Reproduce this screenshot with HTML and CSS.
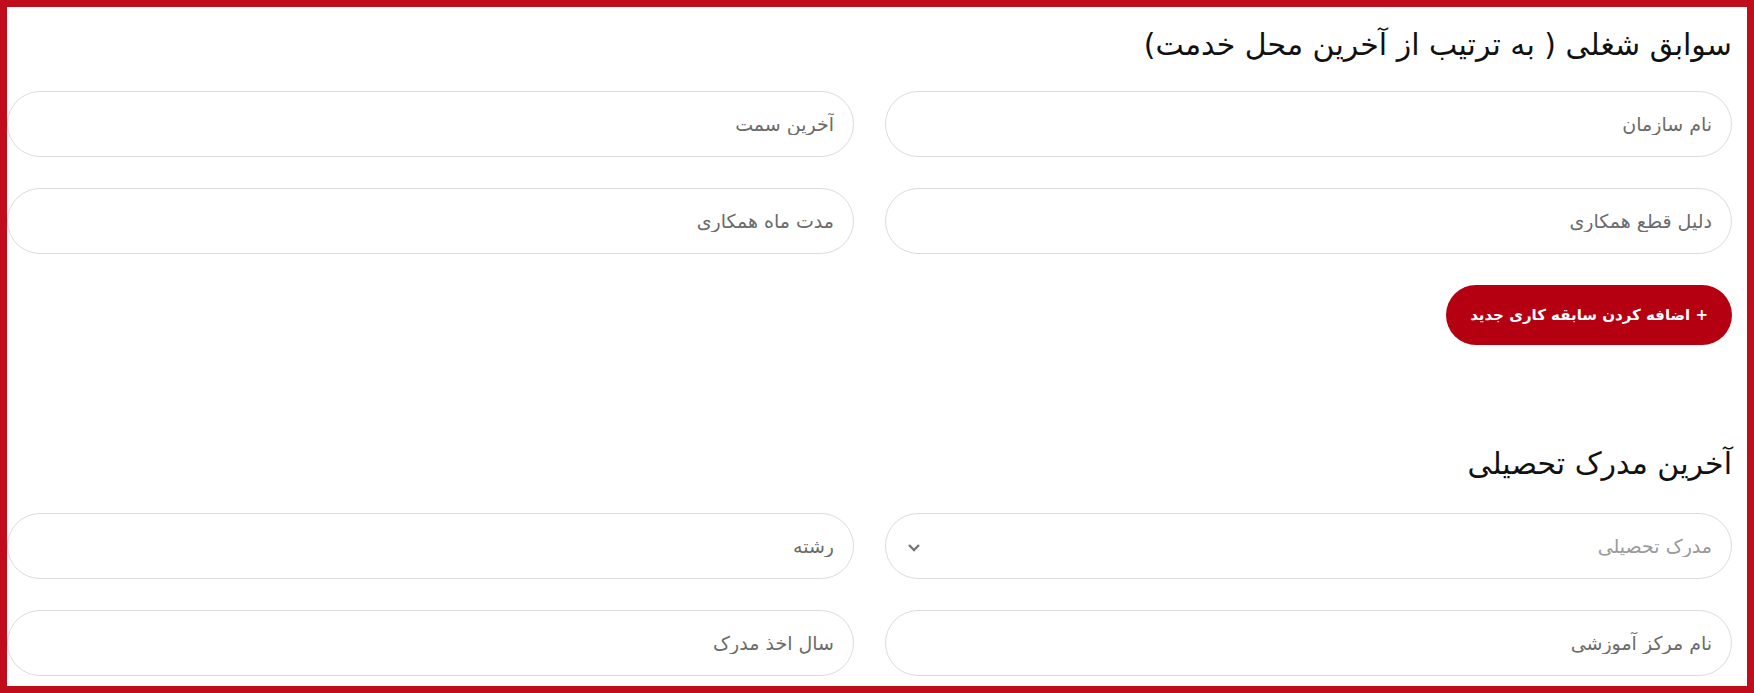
FILE: index.html
```html
<!DOCTYPE html>
<html lang="fa" dir="rtl">
<head>
<meta charset="utf-8">
<title>فرم استخدام</title>
<link rel="stylesheet" href="styles.css">
</head>
<body>
<main class="page">
  <section class="section">
    <h2 class="section-title">سوابق شغلی ( به ترتیب از آخرین محل خدمت)</h2>
    <div class="grid">
      <input class="field" type="text" placeholder="نام سازمان">
      <input class="field" type="text" placeholder="آخرین سمت">
      <input class="field" type="text" placeholder="دلیل قطع همکاری">
      <input class="field" type="text" placeholder="مدت ماه همکاری">
    </div>
    <div class="actions">
      <button class="btn-add" type="button">+ اضافه کردن سابقه کاری جدید</button>
    </div>
  </section>
  <section class="section section-edu">
    <h2 class="section-title">آخرین مدرک تحصیلی</h2>
    <div class="grid">
      <div class="select-wrap">
        <select class="field select">
          <option>مدرک تحصیلی</option>
        </select>
        <svg class="chevron" width="14" height="9" viewBox="0 0 14 9"><path d="M2 2 L7 7 L12 2" fill="none" stroke="#777" stroke-width="2.4"/></svg>
      </div>
      <input class="field" type="text" placeholder="رشته">
      <input class="field" type="text" placeholder="نام مرکز آموزشی">
      <input class="field" type="text" placeholder="سال اخذ مدرک">
    </div>
  </section>
</main>
</body>
</html>
```

FILE: styles.css
```css
* { box-sizing: border-box; }

html, body { margin: 0; padding: 0; }

body {
  height: 693px;
  border: 7px solid #bf0d1c;
  background: #ffffff;
  overflow: hidden;
  direction: rtl;
  font-family: "DejaVu Sans", "Noto Sans", sans-serif;
  color: #111;
}

.page {
  padding: 0 15px 0 0;
}

.section-title {
  margin: 0;
  font-size: 30px;
  font-weight: normal;
  line-height: 40px;
  color: #111;
}

.section:first-child .section-title {
  padding-top: 18px;
  margin-bottom: 26px;
}

.section-edu .section-title {
  margin-top: 99px;
  margin-bottom: 29px;
}

.grid {
  display: grid;
  grid-template-columns: 1fr 1fr;
  column-gap: 31px;
  row-gap: 31px;
}

.field {
  display: block;
  width: 100%;
  height: 66px;
  border: 1px solid #dcdcdc;
  border-radius: 33px;
  background: #fff;
  padding: 0 19px;
  font-family: "DejaVu Sans", "Noto Sans", sans-serif;
  font-size: 19px;
  color: #555;
  direction: rtl;
  text-align: right;
  outline: none;
}

.field::placeholder {
  color: #6b6b6b;
}

.select-wrap {
  position: relative;
}

.select {
  appearance: none;
  -webkit-appearance: none;
  color: #9a9a9a;
}

.chevron {
  position: absolute;
  left: 22px;
  top: 30px;
}

.actions {
  display: flex;
  justify-content: flex-start;
  margin-top: 31px;
}

.btn-add {
  height: 60px;
  padding: 0 24px;
  border: none;
  border-radius: 30px;
  background: #b50012;
  color: #fff;
  font-family: "DejaVu Sans", "Noto Sans", sans-serif;
  font-size: 15px;
  font-weight: bold;
  cursor: pointer;
}
```
